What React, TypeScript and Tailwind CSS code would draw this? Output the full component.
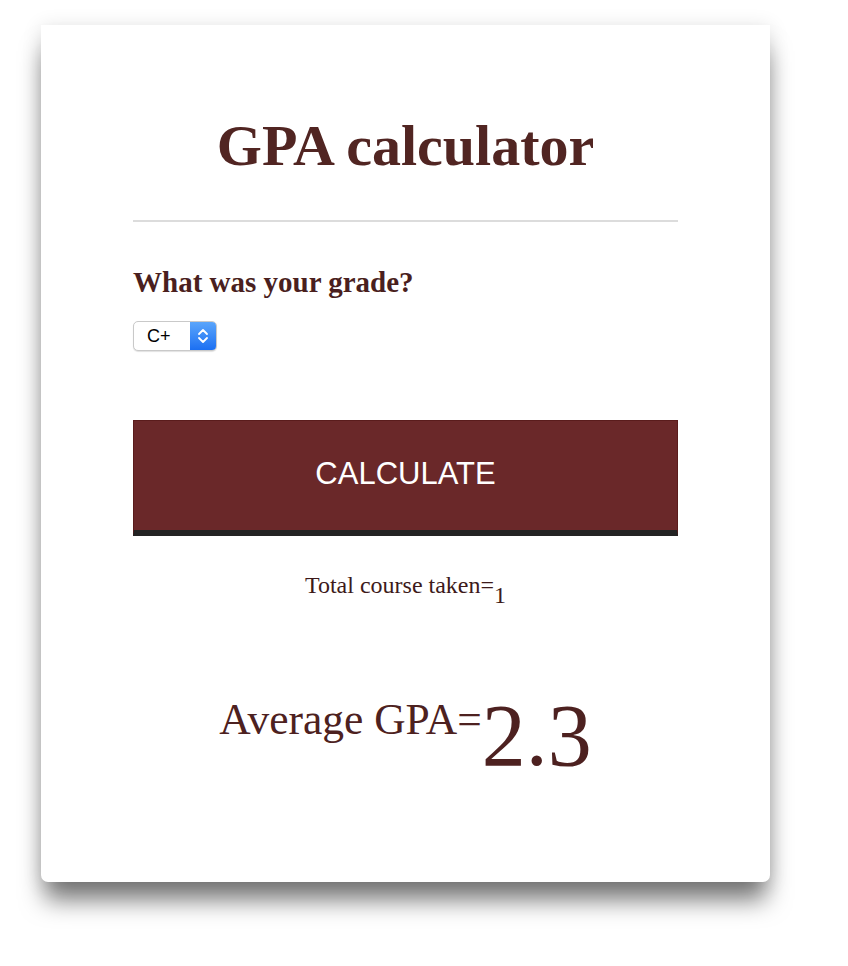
import { useState } from "react";

const grades: Record<string, number> = {
  A: 4.0,
  "A-": 3.7,
  "B+": 3.3,
  B: 3.0,
  "B-": 2.7,
  "C+": 2.3,
  C: 2.0,
  "C-": 1.7,
  D: 1.0,
  F: 0,
};

export default function App() {
  const [grade, setGrade] = useState("C+");
  const [courses] = useState(1);
  const gpa = grades[grade];

  return (
    <div className="min-h-[966px] w-[848px] bg-white pt-[25px] pl-[41px] font-['Liberation_Serif',serif]">
      <div className="flex h-[857px] w-[729px] flex-col rounded-b-[7px] bg-white px-[92px] shadow-[0_22px_24px_-4px_rgba(0,0,0,0.52),0_2px_20px_rgba(0,0,0,0.12)]">
        {/* Title */}
        <h1 className="mt-[92px] text-center text-[58px] font-bold leading-[58px] text-[#512522]">
          GPA calculator
        </h1>
        <hr className="mt-[45px] border-t-2 border-[#dcdcdc]" />

        {/* Grade picker */}
        <h2 className="mt-[46px] text-[29px] font-bold leading-[29px] text-[#4a1f1e]">
          What was your grade?
        </h2>
        <div className="mt-[24px] flex">
          <label className="relative flex h-[30px] w-[84px] items-stretch overflow-hidden rounded-[5px] border border-[#c9c9c9] bg-white shadow-[0_1px_1px_rgba(0,0,0,0.12)]">
            <select
              value={grade}
              onChange={(e) => setGrade(e.target.value)}
              className="w-full appearance-none bg-transparent pl-[13px] font-['Liberation_Sans',sans-serif] text-[18px] text-black outline-none"
            >
              {Object.keys(grades).map((g) => (
                <option key={g} value={g}>
                  {g}
                </option>
              ))}
            </select>
            <span className="pointer-events-none absolute right-0 top-0 flex h-full w-[26px] items-center justify-center bg-gradient-to-b from-[#5aa5fb] to-[#1b6ff2]">
              <svg width="12" height="18" viewBox="0 0 12 18" fill="none">
                <path d="M2 7 L6 3 L10 7" stroke="white" strokeWidth="1.8" strokeLinecap="round" strokeLinejoin="round" />
                <path d="M2 11 L6 15 L10 11" stroke="white" strokeWidth="1.8" strokeLinecap="round" strokeLinejoin="round" />
              </svg>
            </span>
          </label>
        </div>

        {/* Calculate */}
        <button className="mt-[69px] h-[116px] w-full border border-[#5a1c1c] border-b-[6px] border-b-[#232323] bg-[#6a2829] pb-[2px] font-['Liberation_Sans',sans-serif] text-[31px] text-white">
          CALCULATE
        </button>

        <div className="mt-[37px] text-center text-[24px] leading-[24px] text-[#3d1a1a]">
          Total course taken=<span className="align-[-10px] text-[24px] leading-none">{courses}</span>
        </div>

        <div className="mt-[85px] text-center text-[43.5px] leading-[43px] text-[#4d2120]">
          Average GPA=<span className="align-[-31px] text-[88px] leading-none">{gpa.toFixed(1)}</span>
        </div>
      </div>
    </div>
  );
}
